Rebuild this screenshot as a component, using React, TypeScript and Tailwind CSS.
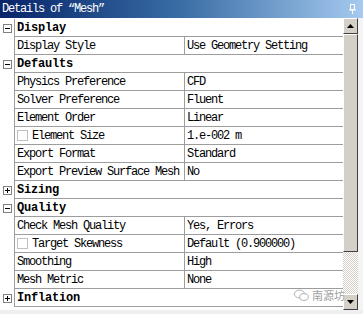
type Row =
  | { kind: 'group'; label: string; open: boolean }
  | { kind: 'prop'; name: string; value: string; check?: boolean };

const rows: Row[] = [
  { kind: 'group', label: 'Display', open: true },
  { kind: 'prop', name: 'Display Style', value: 'Use Geometry Setting' },
  { kind: 'group', label: 'Defaults', open: true },
  { kind: 'prop', name: 'Physics Preference', value: 'CFD' },
  { kind: 'prop', name: 'Solver Preference', value: 'Fluent' },
  { kind: 'prop', name: 'Element Order', value: 'Linear' },
  { kind: 'prop', name: 'Element Size', value: '1.e-002 m', check: true },
  { kind: 'prop', name: 'Export Format', value: 'Standard' },
  { kind: 'prop', name: 'Export Preview Surface Mesh', value: 'No' },
  { kind: 'group', label: 'Sizing', open: false },
  { kind: 'group', label: 'Quality', open: true },
  { kind: 'prop', name: 'Check Mesh Quality', value: 'Yes, Errors' },
  { kind: 'prop', name: 'Target Skewness', value: 'Default (0.900000)', check: true },
  { kind: 'prop', name: 'Smoothing', value: 'High' },
  { kind: 'prop', name: 'Mesh Metric', value: 'None' },
  { kind: 'group', label: 'Inflation', open: false },
];

function Toggle({ open }: { open: boolean }) {
  return (
    <div className="relative w-[9px] h-[9px] border border-[#808080] bg-white">
      <div className="absolute left-[1px] top-[3px] w-[5px] h-px bg-black" />
      {!open && <div className="absolute left-[3px] top-[1px] w-px h-[5px] bg-black" />}
    </div>
  );
}

function ScrollButton({ up }: { up: boolean }) {
  return (
    <div className="w-[15px] h-[16px] bg-[#d4d0c8] border-t border-l border-t-white border-l-white border-r border-b border-r-[#404040] border-b-[#404040] flex items-center justify-center">
      <svg width="7" height="4" viewBox="0 0 7 4">
        {up ? <path d="M3.5 0 L7 4 L0 4 Z" fill="#000" /> : <path d="M0 0 L7 0 L3.5 4 Z" fill="#000" />}
      </svg>
    </div>
  );
}

export default function App() {
  return (
    <div className="relative w-[363px] h-[314px] overflow-hidden bg-[#efefef] font-['Liberation_Mono','Noto_Sans_CJK_SC',monospace] text-[12px] leading-none text-black">
      <div className="h-[18px] flex items-center justify-between pl-[2px] pr-[7px] bg-gradient-to-r from-[#0a246a] via-[#3a6ea5] to-[#a6caf0] text-white tracking-[-1.2px]">
        <span>Details of “Mesh”</span>
        <svg width="7" height="10" viewBox="0 0 7 10">
          <rect x="1.5" y="0.5" width="4" height="5" fill="none" stroke="#fff" />
          <line x1="0" y1="6" x2="7" y2="6" stroke="#fff" />
          <line x1="3.5" y1="6" x2="3.5" y2="10" stroke="#fff" />
        </svg>
      </div>
      <div className="flex">
        <div className="w-[343px] bg-white pt-px">
          {rows.map((r, i) => (
            <div key={i} className="flex h-[18px]">
              <div className="w-[14px] flex items-center justify-center pl-px">
                {r.kind === 'group' && <Toggle open={r.open} />}
              </div>
              <div className="flex-1 flex border-l border-b border-[#9d9d9d]">
                {r.kind === 'group' ? (
                  <div className="pl-[2px] flex items-center font-bold tracking-[-0.2px]">{r.label}</div>
                ) : (
                  <>
                    <div className="w-[169px] pl-[2px] flex items-center gap-[4px] tracking-[-1.2px] whitespace-nowrap overflow-hidden">
                      {r.check && <div className="w-[11px] h-[11px] border border-[#c0c0c0] bg-white shrink-0" />}
                      <span>{r.name}</span>
                    </div>
                    <div className="flex-1 border-l border-[#9d9d9d] pl-[2px] flex items-center tracking-[-1.2px] whitespace-nowrap">
                      {r.value}
                    </div>
                  </>
                )}
              </div>
            </div>
          ))}
        </div>
        <div className="w-[15px] flex flex-col h-[292px]">
          <ScrollButton up />
          <div className="h-[218px] bg-[#d4d0c8] border-t border-l border-t-white border-l-white border-r border-b border-r-[#404040] border-b-[#404040]" />
          <div className="flex-1 bg-[repeating-conic-gradient(#d4d0c8_0_25%,#ffffff_0_50%)] bg-[length:2px_2px]" />
          <ScrollButton up={false} />
        </div>
        <div className="w-[5px] bg-[#f4f4f4]" />
      </div>
      <div className="absolute right-[18px] top-[289px] flex items-center gap-[3px] text-[#a0a0a0] font-['Noto_Sans_CJK_SC',sans-serif] text-[11px]">
        <svg width="15" height="13" viewBox="0 0 15 13" fill="none" stroke="#b0b0b0" strokeWidth="1">
          <ellipse cx="5.5" cy="5" rx="5" ry="4" />
          <ellipse cx="10" cy="8" rx="4.3" ry="3.4" fill="#fff" />
        </svg>
        <span>南源坊</span>
      </div>
    </div>
  );
}
